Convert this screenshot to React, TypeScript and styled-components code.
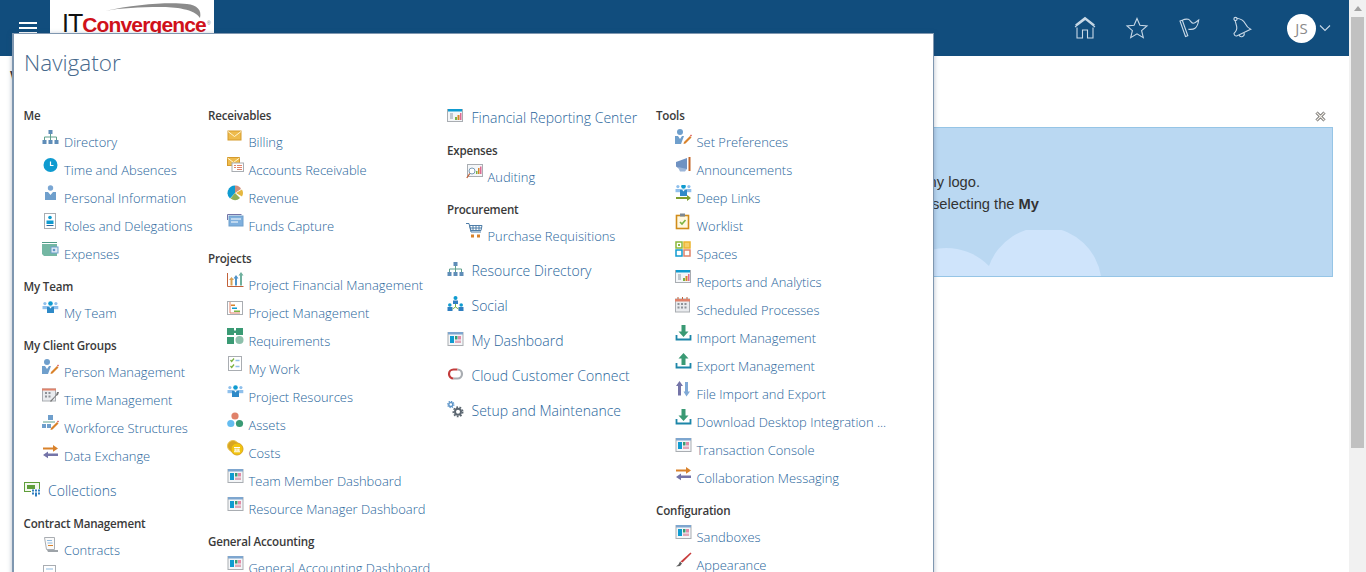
import React from "react";
import styled, { createGlobalStyle } from "styled-components";

const Global = createGlobalStyle`
  html, body { margin: 0; padding: 0; height: 100%; overflow: hidden; background: #fff; }
  #root { height: 100%; }
`;

const Page = styled.div`
  position: relative; display: flex; width: 1366px; height: 572px; overflow: hidden;
  font-family: "Open Sans", "Liberation Sans", sans-serif;
`;
const Main = styled.div`flex: 1; min-width: 0; display: flex; flex-direction: column;`;
const Scrollbar = styled.div`
  width: 17px; flex: none; background: #f1f1f1; display: flex; flex-direction: column; align-items: center;
`;
const ScrollArrow = styled.div`
  height: 17px; width: 100%; display: flex; align-items: center; justify-content: center;
  &::before { content: ""; border-left: 4px solid transparent; border-right: 4px solid transparent; border-bottom: 5px solid #a3a3a3; }
`;
const ScrollThumb = styled.div`width: 13px; flex: 1; margin-bottom: 124px; background: #c1c1c1;`;

const Header = styled.header`
  height: 56px; flex: none; background: #114d7d; display: flex; align-items: flex-start; padding-right: 18px;
`;
const Burger = styled.button`
  width: 18px; height: 8px; margin: 22px 13px 0 19px; padding: 0; border: 0; background: none;
  border-top: 2px solid #fff; border-bottom: 2px solid #fff; position: relative; flex: none; box-sizing: content-box;
  &::after { content: ""; position: absolute; left: 0; right: 0; top: 3px; height: 2px; background: #fff; }
`;
const Logo = styled.div`
  width: 164px; height: 56px; background: #fff; flex: none; position: relative; overflow: hidden;
  display: flex; align-items: baseline; padding: 9px 0 0 12px; box-sizing: border-box; white-space: nowrap;
  font-family: "Liberation Sans", sans-serif; line-height: 28px;
`;
const LogoIt = styled.span`color: #111; font-size: 25px; letter-spacing: -1px; margin-right: 0;`;
const LogoName = styled.span`color: #d0111a; font-weight: 700; font-size: 21px; letter-spacing: -0.85px;`;
const LogoMark = styled.span`color: #777; font-size: 5px; line-height: 5px; align-self: flex-start; margin: 12px 0 0 1px;`;
const Swoosh = styled.svg`position: absolute; left: 55px; top: 2px;`;
const HeaderIcons = styled.div`
  margin-left: auto; display: flex; align-items: center; height: 56px; gap: 26px;
`;
const HeaderIcon = styled.svg`width: 26px; height: 26px; fill: none; stroke: #c9d9e7; stroke-width: 1.1; flex: none;`;
const UserMenu = styled.div`display: flex; align-items: center; gap: 3px; margin-left: 7px;`;
const Avatar = styled.div`
  width: 29px; height: 29px; border-radius: 50%; background: #fff; color: #8a8a8a;
  font-size: 15px; line-height: 29px; text-align: center;
`;
const Chevron = styled.svg`width: 12px; height: 8px; fill: none; stroke: #c9d9e7; stroke-width: 1.1;`;

const Content = styled.main`
  flex: 1; display: flex; flex-direction: column; padding: 12px 16px 0 10px; position: relative;
`;
const PageTitle = styled.h1`
  margin: 0; font: 400 18px/20px "Liberation Sans", sans-serif; color: #333;
`;
const CloseRow = styled.div`display: flex; justify-content: flex-end; padding: 23px 7px 5px 0;`;
const InfoBox = styled.section`
  box-sizing: content-box; height: 148px; margin-left: 10px; background: #bad8f2; border: 1px solid #96c5e6;
  position: relative; overflow: hidden; display: flex; flex-direction: column; align-items: flex-end;
`;
const Message = styled.div`
  width: 1100px; margin-right: 293px; margin-top: 43px; display: flex; flex-direction: column; align-items: flex-end;
  font: 14.7px/22px "Liberation Sans", sans-serif; color: #333;
`;
const MessageLine = styled.div<{ $inset: number }>`padding-right: ${(p) => p.$inset}px; white-space: nowrap;`;
const Clouds = styled.svg`position: absolute; right: 0; bottom: 0; fill: #cfe4fb;`;

const Panel = styled.nav`
  position: absolute; left: 12px; top: 33px; width: 922px; height: 560px; box-sizing: border-box;
  background: #fff; border: 1px solid #7f97b0; border-left-width: 2px; box-shadow: 0 1px 5px rgba(40, 70, 100, .35);
  overflow: hidden;
`;
const PanelTitle = styled.h2`
  margin: 0; padding: 13px 0 0 10px; height: 51px;
  font-weight: 300; font-size: 22.5px; line-height: 32px; color: #47698c;
`;
const Columns = styled.div`
  display: grid; grid-template-columns: 184.5px 239px 209px 240px; padding-left: 9.5px; align-items: start;
`;
const Column = styled.div`display: flex; flex-direction: column; min-width: 0;`;
const GroupHead = styled.h3`
  margin: 8px 0 3px; font-weight: 600; font-size: 11.6px; letter-spacing: -0.2px; line-height: 20px; color: #3a3a3a; white-space: nowrap;
`;
const Item = styled.a`
  display: flex; height: 28px; padding-left: 18.5px; align-items: flex-start; gap: 5px;
  font-size: 12.95px; font-weight: 350; line-height: 27px; color: #28659b; white-space: nowrap;
`;
const ItemIcon = styled.svg`width: 17px; height: 17px; flex: none;`;
const TopItem = styled.a`
  display: flex; height: 35px; align-items: flex-start; gap: 7.5px; margin-top: 3px;
  font-size: 14px; font-weight: 350; line-height: 34px; color: #28659b; white-space: nowrap;
  & + & { margin-top: 0; }
  & + ${GroupHead} { margin-top: 5px; }
`;
const TopIcon = styled.svg`width: 17px; height: 17px; flex: none; margin-top: 7px;`;

const B = "#5e95c8", BL = "#8fc0ec", CY = "#0f9bd0", G = "#3a9a74", LG = "#7cb342", O = "#d9822b", Y = "#eebb4d", R = "#e0826a", GR = "#a9adb2", P = "#7474a8";

const dash = (
  <>
    <rect x="1" y="1.500" width="15" height="13" fill="#f4f6f8" stroke={GR} />
    <rect x="1" y="1" width="15" height="2.500" fill="#7ea6cf" />
    <rect x="3" y="5" width="4" height="7" fill={CY} />
    <rect x="8" y="5" width="2.500" height="3.500" fill={G} />
    <rect x="11" y="5" width="3" height="3.500" fill="#e28aa6" />
    <rect x="8" y="9.500" width="6" height="2.500" fill="#e0a8b8" />
  </>
);
const person = (x: number, y: number, c = B, s = 1) => (
  <g transform={`translate(${x} ${y}) scale(${s})`}>
    <circle cx="3" cy="2" r="2" fill={c} />
    <path d="M0 5h6v4H0z" fill={c} />
  </g>
);
const team = (
  <>
    {person(0.5, 2, BL, 0.8)}
    {person(11.5, 2, BL, 0.8)}
    <circle cx="8.500" cy="3.500" r="2.300" fill={CY} />
    <path d="M5 6.500h7V13H5z" fill="#2f8ac8" />
    <path d="M7 6.500l1.500 2 1.500-2z" fill="#fff" />
  </>
);
const pencil = (
  <>
    <path d="M9 13l6-6 1.500 1.500-6 6-2 .5z" fill={O} />
    <path d="M15 6.500l1-1 1 1-1 1z" fill="#d9534f" />
  </>
);
const arrowsX = (
  <>
    <path d="M1 4.500h10V2l5 3.500-5 3.200V6.500H1z" fill={O} />
    <path d="M16 10.500H6V8.500l-5 3.500 5 3.200V13h10z" fill={P} />
  </>
);
const tray = (up: boolean) => (
  <>
    <path d="M1.500 10v4.500h14V10" fill="none" stroke="#1d86a8" strokeWidth="1.800" />
    {up ? <path d="M8.500 0l5 5.500h-3V12h-4V5.500h-3z" fill={G} /> : <path d="M6.500 0h4v6.500h3l-5 5.500-5-5.500h3z" fill={G} />}
  </>
);

const icons: Record<string, React.ReactNode> = {
  directory: (
    <>
      <rect x="6.500" y="1" width="4" height="4" fill="#5f8db8" />
      <path d="M8.500 5v3M2.500 11V8h12v3M8.500 8v3" fill="none" stroke="#5fa08c" />
      <rect x="0.500" y="11" width="4" height="4" fill="#5f8db8" />
      <rect x="6.500" y="11" width="4" height="4" fill="#5f8db8" />
      <rect x="12.500" y="11" width="4" height="4" fill="#5f8db8" />
    </>
  ),
  clock: (
    <>
      <circle cx="8.500" cy="8" r="7" fill={CY} />
      <path d="M8.500 4.500V8.500h3" fill="none" stroke="#fff" strokeWidth="1.200" />
    </>
  ),
  person: (
    <>
      <circle cx="8.500" cy="3" r="2.700" fill="#7aa6d3" />
      <path d="M3 7h3l2.500 3L11 7h3v8H3z" fill="#6f9fcc" />
    </>
  ),
  roles: (
    <>
      <rect x="2.500" y="0.500" width="11" height="15" fill="#fff" stroke={GR} />
      <circle cx="8" cy="4.500" r="1.800" fill={CY} />
      <path d="M4.500 7.500h7V11h-7z" fill={CY} />
      <path d="M4.500 12h7v1h-7z" fill="#2f6a9e" />
    </>
  ),
  wallet: (
    <>
      <rect x="0" y="1" width="15" height="1" fill="#4f9a86" />
      <path d="M0 3h15v12H2l-2-2z" fill="#74b7a3" />
      <rect x="9" y="6" width="7" height="6" fill="#dfe9f3" stroke="#6f9fcc" />
      <circle cx="12" cy="9" r="1.300" fill="#5e95c8" />
    </>
  ),
  team,
  personEdit: (
    <>
      <circle cx="5" cy="3" r="3" fill="#6f9fcc" />
      <path d="M0 7h3l2 3 2-3h2l-3 8H0z" fill="#6f9fcc" />
      {pencil}
    </>
  ),
  timeMgmt: (
    <>
      <rect x="0.500" y="2" width="13" height="12" fill="#e9ebee" stroke={GR} />
      <path d="M0 1.500h14v2H0z" fill={R} />
      <path d="M3 5h2v2H3zM6.500 5h2v2h-2zM3 8.500h2v2H3zM6.500 8.500h2v2h-2z" fill="#8d9298" />
      <path d="M8 14l6-6 1-3 2 0-1 3-2 1-5 6z" fill="#777" />
    </>
  ),
  workforce: (
    <>
      <rect x="6" y="0" width="5" height="5" fill="#6f9fcc" />
      <path d="M1 7h12" stroke="#5fa08c" fill="none" />
      <rect x="0" y="9" width="4" height="4" fill="#6f9fcc" />
      <rect x="5" y="9" width="4" height="4" fill="#6f9fcc" />
      {pencil}
    </>
  ),
  exchange: arrowsX,
  collections: (
    <>
      <rect x="0.500" y="1.500" width="15" height="9" fill="#f3f8ef" stroke="#5f9e3a" />
      <rect x="3" y="4" width="8" height="4" fill="#5f9e3a" />
      <path d="M7 8h9v7H7z" fill="#fff" />
      <path d="M8 8.500h2v2H8zM11 8.500h2v2h-2zM14 8.500h2v2h-2zM8 11.500h2v2H8zM11 11.500h2v4h-2zM14 11.500h2v2h-2z" fill="#2f7ec0" />
    </>
  ),
  contracts: (
    <>
      <path d="M2.500 0.500h10v12h-8z" fill="#fafafa" stroke={GR} />
      <path d="M5 3.500h5M5.500 6h5" stroke="#8fbbe0" fill="none" />
      <path d="M6 8.500h5" stroke={O} fill="none" />
      <path d="M5 13h11v2H6z" fill="#9da3a8" />
    </>
  ),
  doc: (
    <>
      <rect x="1.500" y="0.500" width="12" height="15" fill="#fff" stroke={GR} />
      <path d="M4 4h7" stroke="#8fbbe0" fill="none" />
    </>
  ),
  mail: (
    <>
      <rect x="1" y="2" width="13" height="9" fill={Y} stroke="#d59b2d" />
      <path d="M1 2.500l6.500 5 6.500-5" fill="none" stroke="#fff4cf" />
    </>
  ),
  mailDoc: (
    <>
      <rect x="0.500" y="0.500" width="12" height="8" fill={Y} stroke="#d59b2d" />
      <path d="M0.500 1l6 4.500 6-4.500" fill="none" stroke="#fff4cf" />
      <rect x="5" y="6" width="11.500" height="8.500" fill="#fff" stroke={GR} />
      <path d="M7 8.500h2M10 8.500h5M7 10.500h2M10 10.500h5M10 12.500h5" stroke={R} fill="none" />
    </>
  ),
  pie: (
    <>
      <path d="M8 8V.5A7.500 7.500 0 0 0 3 13.500z" fill={CY} />
      <path d="M8 8V.5a6 6 0 0 1 6 3.500z" fill="#d08f7c" />
      <path d="M9 8l6-3.500a7 7 0 0 1 0 7z" fill="#e5b73f" />
      <path d="M8 8l5 5a7.500 7.500 0 0 1-9.500.5z" fill="#8fae57" />
    </>
  ),
  card: (
    <>
      <path d="M.5 7V1.500h14" fill="none" stroke={P} />
      <rect x="2" y="3" width="14" height="10" fill="#7fb0de" stroke="#6f9fcc" />
      <path d="M4 6h10M4 9h7" stroke="#fff" fill="none" />
    </>
  ),
  chartUp: (
    <>
      <path d="M.5 1v13.500h16" fill="none" stroke="#c2623a" />
      <path d="M4.500 5l2.500 3H5.500v5.500h-2V8H2z" fill="#d9a254" />
      <path d="M9 3l2.500 3.500H10v7H8v-7H6.500z" fill="#4f93c8" />
      <path d="M14 0l2.500 3.500H15v10h-2v-10h-1.500z" fill="#6fb09e" />
    </>
  ),
  gantt: (
    <>
      <rect x="0.500" y="1.500" width="15" height="13" fill="#fff" stroke={GR} />
      <path d="M3 2v11h10" fill="none" stroke={R} />
      <path d="M4 4.500h4V6H4z" fill={O} />
      <path d="M5 7.500h5V9H5z" fill={CY} />
      <path d="M7 10.500h6V12H7z" fill={LG} />
    </>
  ),
  puzzle: (
    <>
      <rect x="0" y="0" width="7" height="7" fill={G} />
      <rect x="9" y="0" width="7" height="7" fill={G} />
      <rect x="0" y="9" width="7" height="7" fill={G} />
      <circle cx="12.500" cy="12" r="4" fill="#8dc0ab" />
      <rect x="6" y="2.500" width="4" height="2.500" fill={G} />
    </>
  ),
  checklist: (
    <>
      <rect x="1.500" y="0.500" width="13" height="14" fill="#fff" stroke={GR} />
      <path d="M3.500 4l1.200 1.500L7 2.500M3.500 10l1.200 1.500L7 8.500" fill="none" stroke={LG} strokeWidth="1.300" />
      <path d="M8.500 4.500h4M8.500 10.500h4" stroke={BL} strokeWidth="1.500" />
    </>
  ),
  assets: (
    <>
      <circle cx="8" cy="4" r="3.600" fill={R} />
      <circle cx="3.800" cy="11.500" r="3.600" fill="#64bcf0" />
      <circle cx="12.500" cy="11.500" r="3.600" fill={G} />
    </>
  ),
  coins: (
    <>
      <circle cx="6" cy="6" r="5.500" fill="#d9a520" stroke="#e9c552" />
      <circle cx="10" cy="9" r="6" fill="#f2c40f" stroke="#d9a520" />
      <path d="M7 7h6v1H7zM7.500 8.500h1.300v2.500H7.500zM9.400 8.500h1.300v2.500H9.400zM11.200 8.500h1.300v2.500h-1.300zM7 11.200h6v1H7z" fill="#fff" />
    </>
  ),
  dash,
  report: (
    <>
      <rect x="0.500" y="1.500" width="15" height="12" fill="#f4f6f8" stroke={GR} />
      <rect x="1" y="1" width="14" height="2.500" fill={CY} />
      <path d="M3 6h3M3 8h3M3 10h3" stroke="#8d9ca8" />
      <path d="M8 9h2v3H8z" fill={LG} />
      <path d="M10.500 7h2v5h-2z" fill={O} />
      <path d="M13 5h1.500v7H13z" fill="#dd6a93" />
    </>
  ),
  audit: (
    <>
      <rect x="1.500" y="0.500" width="15" height="12" fill="#f4f6f8" stroke={GR} />
      <path d="M10 7h1.500v3H10z" fill={LG} />
      <path d="M12 4h1.500v6H12z" fill={O} />
      <path d="M14 2.500h1.500V10H14z" fill="#dd6a93" />
      <circle cx="6" cy="7" r="3" fill="#fff" stroke="#7a9bb5" />
      <path d="M3.800 9.500l-3 4.500" stroke="#c2623a" strokeWidth="1.300" />
    </>
  ),
  cart: (
    <>
      <path d="M0 .5h3l2 8.500h10" fill="none" stroke="#4f7ea8" />
      <path d="M3.500 2.500h12.500l-1 5H5zM7 2.500v5M10 2.500v5M13 2.500v5M4.500 5h11" fill="none" stroke="#4f7ea8" />
      <rect x="5" y="11.500" width="3" height="3" fill={O} />
      <rect x="11" y="11.500" width="3" height="3" fill={O} />
    </>
  ),
  social: (
    <>
      <circle cx="8.500" cy="2" r="2" fill={CY} />
      <path d="M6 4.500h5v3.500H6z" fill="#2f7ec0" />
      <circle cx="2.800" cy="9" r="1.800" fill={CY} />
      <path d="M0.500 11h5v4h-5z" fill="#2f7ec0" />
      <circle cx="14.200" cy="9" r="1.800" fill={CY} />
      <path d="M11.500 11h5v4h-5z" fill="#2f7ec0" />
      <path d="M8.500 8v3M5.500 13l3-2 3 2" fill="none" stroke={LG} />
    </>
  ),
  cloud: (
    <>
      <path d="M6.500 12.500a4.500 4.500 0 0 1 0-9h4" fill="none" stroke="#c23b3b" strokeWidth="2.200" />
      <path d="M10.500 3.500a4.500 4.500 0 0 1 0 9h-4" fill="none" stroke="#a9adb2" strokeWidth="2.200" />
    </>
  ),
  gears: (
    <>
      <circle cx="3.800" cy="3.500" r="2" fill="#fff" stroke="#5e95c8" strokeWidth="1.400" />
      <circle cx="3.800" cy="3.500" r="3.100" fill="none" stroke="#5e95c8" strokeWidth="1.200" strokeDasharray="1.300 1.100" />
      <circle cx="11" cy="10.800" r="3" fill="#fff" stroke="#5b6670" strokeWidth="2" />
      <circle cx="11" cy="10.800" r="4.700" fill="none" stroke="#5b6670" strokeWidth="1.600" strokeDasharray="1.800 1.500" />
    </>
  ),
  announce: (
    <>
      <path d="M1 5l11-4v11H4.500L1 9.500z" fill="#6f92c2" />
      <path d="M3 10l9 2-2 2.500H5z" fill="#9cb6d9" />
      <rect x="13.500" y="0" width="2" height="14" fill="#c2662a" />
    </>
  ),
  deeplinks: (
    <>
      <g transform="translate(0 -2)">{team}</g>
      <path d="M1 13h11v-2l4 3-4 3v-2H1z" fill="#7f9f2f" transform="translate(0 -1)" />
    </>
  ),
  worklist: (
    <>
      <rect x="1.500" y="2.500" width="12" height="13" fill="#fff8e0" stroke="#d08c1a" strokeWidth="1.600" />
      <rect x="5" y="0.500" width="5" height="3" fill="#7d8790" />
      <path d="M5 9l2 2 3.500-4" fill="none" stroke={LG} strokeWidth="1.600" />
    </>
  ),
  spaces: (
    <>
      <rect x="1" y="1" width="6" height="6" fill="#fff" stroke="#8bb83a" strokeWidth="1.500" />
      <rect x="3" y="3" width="2" height="2" fill="#8bb83a" />
      <rect x="9" y="1" width="6" height="6" fill="#f5cf6a" stroke="#ecb52e" strokeWidth="1.500" />
      <rect x="1" y="9" width="6" height="6" fill="#fff" stroke={CY} strokeWidth="1.500" />
      <rect x="9" y="9" width="6" height="6" fill="#fff" stroke={R} strokeWidth="1.500" />
    </>
  ),
  calendar: (
    <>
      <rect x="0.500" y="2" width="14" height="13" fill="#e9ebee" stroke={GR} />
      <path d="M0 2h15v2.500H0z" fill={R} />
      <path d="M3 0v2M7.500 0v2M12 0v2" stroke="#c2623a" />
      <path d="M2.500 6h2v2h-2zM6 6h2v2H6zM9.500 6h2v2h-2zM2.500 9.500h2v2h-2zM6 9.500h2v2H6zM9.500 9.500h2v2h-2z" fill="#8d9298" />
    </>
  ),
  importI: tray(false),
  exportI: tray(true),
  fileio: (
    <>
      <path d="M4.500 0l3.500 5H6v9.500H3V5H1z" fill={P} />
      <path d="M10 1h3v9.500h2L11.500 15.500 8.500 10.500H10z" fill="#7fa9d6" />
    </>
  ),
  transfer: arrowsX,
  brush: (
    <>
      <path d="M15.500 0.500l1 1-9 9-2-1z" fill="#c83c3c" />
      <path d="M5 9.500l2 2-2 2.500-4 .5 2.500-2z" fill="#5e5e5e" />
    </>
  ),
};

type Entry =
  | { t: "head"; label: string }
  | { t: "item"; label: string; icon: string }
  | { t: "top"; label: string; icon: string };

const head = (label: string): Entry => ({ t: "head", label });
const item = (label: string, icon: string): Entry => ({ t: "item", label, icon });
const top = (label: string, icon: string): Entry => ({ t: "top", label, icon });

const columns: Entry[][] = [
  [
    head("Me"), item("Directory", "directory"), item("Time and Absences", "clock"), item("Personal Information", "person"),
    item("Roles and Delegations", "roles"), item("Expenses", "wallet"),
    head("My Team"), item("My Team", "team"),
    head("My Client Groups"), item("Person Management", "personEdit"), item("Time Management", "timeMgmt"),
    item("Workforce Structures", "workforce"), item("Data Exchange", "exchange"),
    top("Collections", "collections"),
    head("Contract Management"), item("Contracts", "contracts"), item("Deliverables", "doc"),
  ],
  [
    head("Receivables"), item("Billing", "mail"), item("Accounts Receivable", "mailDoc"), item("Revenue", "pie"), item("Funds Capture", "card"),
    head("Projects"), item("Project Financial Management", "chartUp"), item("Project Management", "gantt"), item("Requirements", "puzzle"),
    item("My Work", "checklist"), item("Project Resources", "team"), item("Assets", "assets"), item("Costs", "coins"),
    item("Team Member Dashboard", "dash"), item("Resource Manager Dashboard", "dash"),
    head("General Accounting"), item("General Accounting Dashboard", "dash"),
  ],
  [
    top("Financial Reporting Center", "report"),
    head("Expenses"), item("Auditing", "audit"),
    head("Procurement"), item("Purchase Requisitions", "cart"),
    top("Resource Directory", "directory"), top("Social", "social"), top("My Dashboard", "dash"),
    top("Cloud Customer Connect", "cloud"), top("Setup and Maintenance", "gears"),
  ],
  [
    head("Tools"), item("Set Preferences", "personEdit"), item("Announcements", "announce"), item("Deep Links", "deeplinks"), item("Worklist", "worklist"),
    item("Spaces", "spaces"), item("Reports and Analytics", "report"), item("Scheduled Processes", "calendar"), item("Import Management", "importI"),
    item("Export Management", "exportI"), item("File Import and Export", "fileio"), item("Download Desktop Integration ...", "importI"),
    item("Transaction Console", "dash"), item("Collaboration Messaging", "transfer"),
    head("Configuration"), item("Sandboxes", "dash"), item("Appearance", "brush"),
  ],
];

export default function App() {
  return (
    <Page>
      <Global />
      <Main>
        <Header>
          <Burger aria-label="Menu" />
          <Logo>
            <Swoosh width="97" height="18" viewBox="0 0 97 18">
              <path d="M0 9C30 2 65 0 82 2c10 1 15 6 13 14C90 7 70 5 55 5 35 5 15 6 0 9z" fill="#8b8b8b" />
            </Swoosh>
            <LogoIt>IT</LogoIt>
            <LogoName>Convergence</LogoName>
            <LogoMark>®</LogoMark>
          </Logo>
          <HeaderIcons>
            <HeaderIcon viewBox="0 0 26 26">
              <path d="M3 12L13 4l10 8M5 10.500L13 4.500M5 12.500V23h5.500v-8h5v8H21V12.500M3.500 10L13 2.500 22.500 10" />
            </HeaderIcon>
            <HeaderIcon viewBox="0 0 26 26">
              <path d="M13 3.500l2.900 6.700 7.100.7-5.400 4.700 1.700 7-6.300-3.800-6.300 3.800 1.700-7L3 10.900l7.100-.7z" />
            </HeaderIcon>
            <HeaderIcon viewBox="0 0 26 26">
              <path d="M4 6l5.500 15.500 2.300-.8L6.300 5.200zM6.700 5c2-1 4-1 5.600-.7 2 .6 3 4 5 4 2 0 3.500-2 5.400-3.300-.5 3.500-2 7-3.700 8.300-2 1.500-4.500 1-6.700 1" />
            </HeaderIcon>
            <HeaderIcon viewBox="0 0 26 26">
              <circle cx="7.500" cy="4" r="1.600" />
              <path d="M8.700 3.300c4 .5 6.800 2 8.300 5 1.500 3 3 4.800 5.700 6L8.700 21c-1.500.2-2.700-1-2.700-2.700 2.500-2.200 3.200-4 2.700-6.600C8.300 9.500 7.500 7.500 7 5" />
              <path d="M11 20a2.600 2.600 0 0 0 5-2" />
            </HeaderIcon>
            <UserMenu>
              <Avatar>JS</Avatar>
              <Chevron viewBox="0 0 12 8">
                <path d="M1 1.500l5 5 5-5" />
              </Chevron>
            </UserMenu>
          </HeaderIcons>
        </Header>
        <Content>
          <PageTitle>Welcome</PageTitle>
          <CloseRow>
            <svg width="11" height="11" viewBox="0 0 11 11">
              <path d="M1.500 1.500l8 8M9.500 1.500l-8 8" stroke="#666" strokeWidth="3" />
              <path d="M1.500 1.500l8 8M9.500 1.500l-8 8" stroke="#f4efe6" strokeWidth="1.200" />
            </svg>
          </CloseRow>
          <InfoBox>
            <Message>
              <MessageLine $inset={59}>You can brand this page with any logo.</MessageLine>
              <MessageLine $inset={0}>
                Open the settings at any time by selecting the <b>My</b>
              </MessageLine>
            </Message>
            <Clouds width="420" height="46" viewBox="0 0 420 46">
              <path d="M0 46V28.600A60 60 0 0 1 77 36A58 58 0 0 1 189 46z" />
            </Clouds>
          </InfoBox>
        </Content>
      </Main>
      <Scrollbar>
        <ScrollArrow />
        <ScrollThumb />
      </Scrollbar>
      <Panel>
        <PanelTitle>Navigator</PanelTitle>
        <Columns>
          {columns.map((col, i) => (
            <Column key={i}>
              {col.map((e, j) =>
                e.t === "head" ? (
                  <GroupHead key={j}>{e.label}</GroupHead>
                ) : e.t === "top" ? (
                  <TopItem key={j}>
                    <TopIcon viewBox="0 0 17 17">{icons[e.icon]}</TopIcon>
                    {e.label}
                  </TopItem>
                ) : (
                  <Item key={j}>
                    <ItemIcon viewBox="0 0 17 17">{icons[e.icon]}</ItemIcon>
                    {e.label}
                  </Item>
                )
              )}
            </Column>
          ))}
        </Columns>
      </Panel>
    </Page>
  );
}
